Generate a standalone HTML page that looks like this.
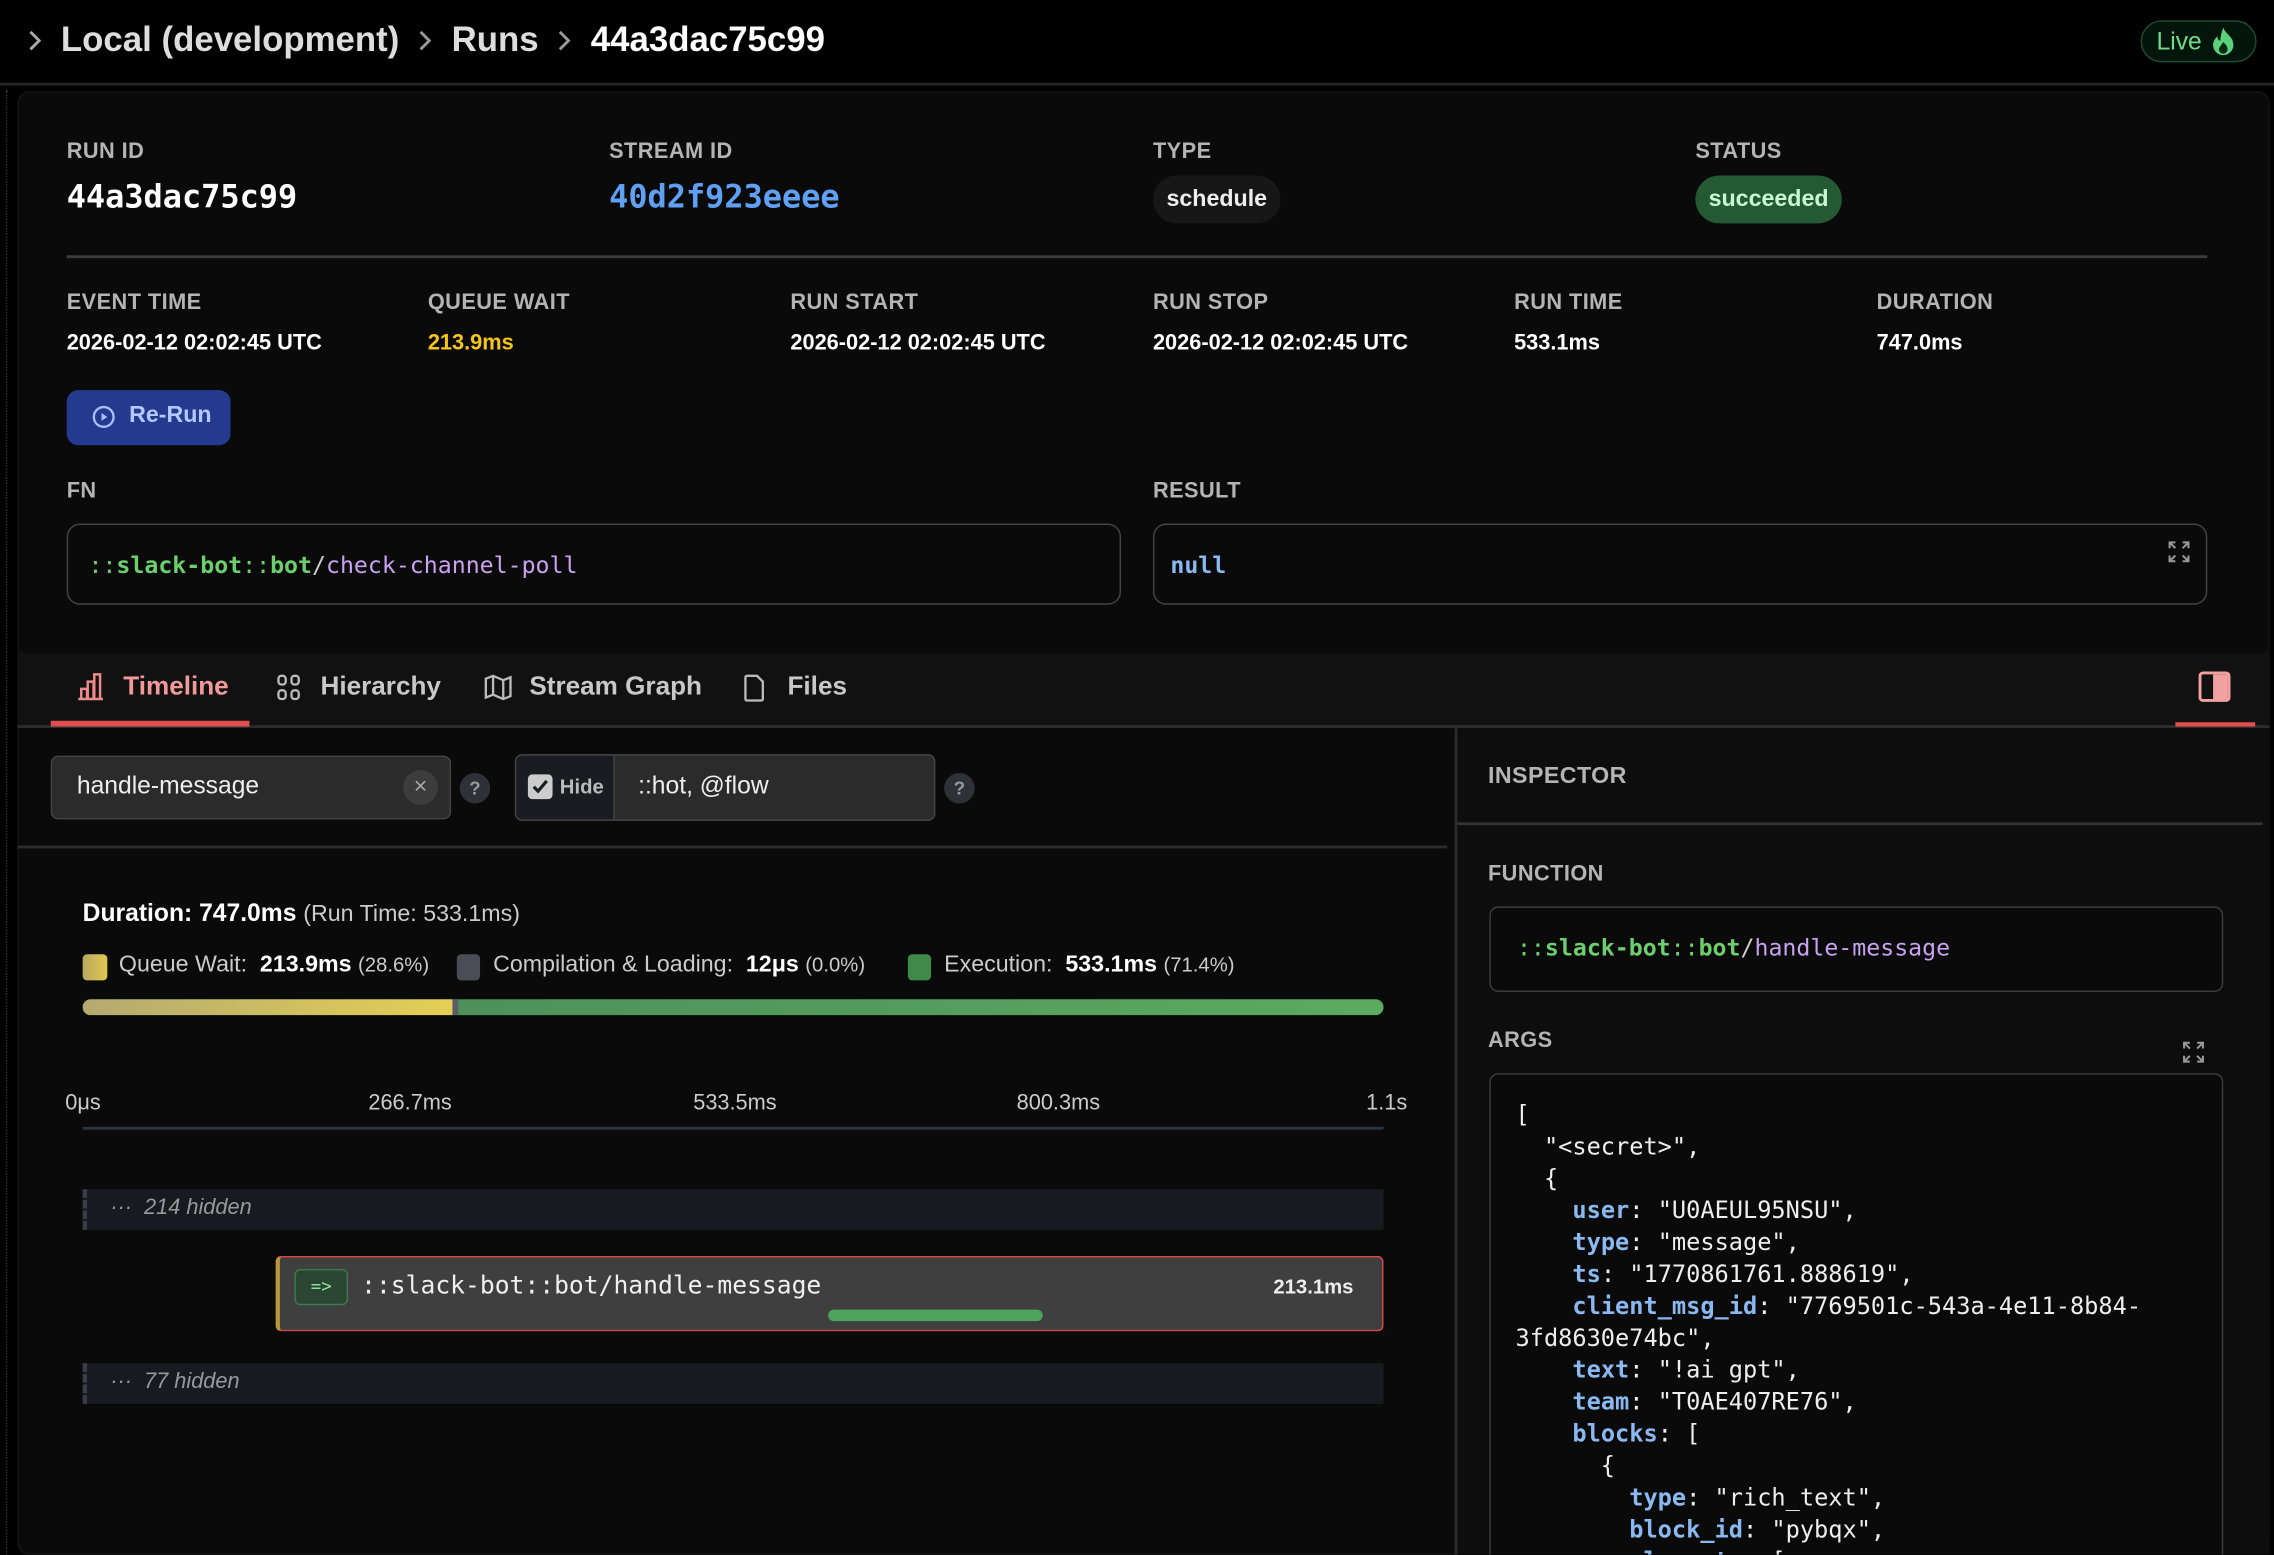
<!DOCTYPE html>
<html><head><meta charset="utf-8"><style>
*{box-sizing:border-box;margin:0;padding:0}
html,body{width:2274px;height:1554px;overflow:hidden;background:#000}
#s{position:absolute;left:0;top:0;width:1568px;height:1072px;transform:scale(1.450255);transform-origin:0 0;font-family:"Liberation Sans Narrow","Liberation Sans",sans-serif;color:#fff;background:#000;overflow:hidden}
.a{position:absolute}
.m{font-family:"DejaVu Sans Mono","Liberation Mono",monospace}
.lab{position:absolute;font-size:15px;font-weight:bold;color:#b4b4b4;letter-spacing:.3px;line-height:1}
.val{position:absolute;font-size:15px;font-weight:bold;color:#fff;line-height:1}
.g{color:#6dce6d}.p{color:#c9a2f0}.k{color:#8ab8f0}
.bc{position:absolute;left:18px;top:12px;display:flex;align-items:center;gap:12px;white-space:nowrap;font-size:24px;font-weight:bold;color:#ddd;height:32px}
</style></head><body><div id="s">
<!-- top bar -->
<div class="a" style="left:0;top:0;width:1568px;height:59px;background:#000;border-bottom:2px solid #262626"></div>
<div class="bc">
<svg width="12" height="16" viewBox="0 0 12 16"><path d="M3 2l6 6-6 6" stroke="#aaa" stroke-width="2" fill="none"/></svg>
<span>Local (development)</span>
<svg width="12" height="16" viewBox="0 0 12 16"><path d="M3 2l6 6-6 6" stroke="#999" stroke-width="2" fill="none"/></svg>
<span>Runs</span>
<svg width="12" height="16" viewBox="0 0 12 16"><path d="M3 2l6 6-6 6" stroke="#999" stroke-width="2" fill="none"/></svg>
<span style="color:#fff">44a3dac75c99</span>
</div>
<div class="a" style="left:1476px;top:14px;width:80px;height:29px;border:1.5px solid #1f4a30;border-radius:15px;background:#04150b"></div>
<div class="a" style="left:1487px;top:19px;font-size:17px;color:#6fdc8c">Live</div>
<svg class="a" style="left:1524px;top:18px" width="18" height="21" viewBox="0 0 18 21"><path d="M9 1c1 4 7 6 7 12a7 7 0 0 1-14 0c0-3 2-5 3-6 0 2 1 3 2 3C7 7 8 4 9 1z" fill="#5ad17a"/><path d="M9 11c2 2 3 3 3 5a3 3 0 0 1-6 0c0-1 1-2 3-5z" fill="#0b2a15"/></svg>
<!-- left dots -->
<div class="a" style="left:4px;top:62px;width:1px;height:1010px;border-left:1px dotted #333"></div>
<!-- main card -->
<div class="a" style="left:12px;top:63px;width:1553px;height:1009px;background:#0a0a0a;border-radius:8px;border:1px solid #141414"></div>
<div class="lab" style="left:46px;top:97px">RUN ID</div>
<div class="lab" style="left:420px;top:97px">STREAM ID</div>
<div class="lab" style="left:795px;top:97px">TYPE</div>
<div class="lab" style="left:1169px;top:97px">STATUS</div>
<div class="a m" style="left:46px;top:124px;font-size:22px;font-weight:bold">44a3dac75c99</div>
<div class="a m" style="left:420px;top:124px;font-size:22px;font-weight:bold;color:#5fa0f5">40d2f923eeee</div>
<div class="a" style="left:795px;top:121px;width:88px;height:33px;background:#171717;border-radius:17px;font-size:16px;font-weight:bold;color:#eee;text-align:center;line-height:33px">schedule</div>
<div class="a" style="left:1169px;top:121px;width:101px;height:33px;background:#245a33;border-radius:17px;font-size:16px;font-weight:bold;color:#c9f7d3;text-align:center;line-height:33px">succeeded</div>
<div class="a" style="left:46px;top:176px;width:1476px;height:2px;background:#3c3c3c"></div>
<div class="lab" style="left:46px;top:201px">EVENT TIME</div>
<div class="lab" style="left:295px;top:201px">QUEUE WAIT</div>
<div class="lab" style="left:545px;top:201px">RUN START</div>
<div class="lab" style="left:795px;top:201px">RUN STOP</div>
<div class="lab" style="left:1044px;top:201px">RUN TIME</div>
<div class="lab" style="left:1294px;top:201px">DURATION</div>
<div class="val" style="left:46px;top:229px">2026-02-12 02:02:45 UTC</div>
<div class="val" style="left:295px;top:229px;color:#f5c518">213.9ms</div>
<div class="val" style="left:545px;top:229px">2026-02-12 02:02:45 UTC</div>
<div class="val" style="left:795px;top:229px">2026-02-12 02:02:45 UTC</div>
<div class="val" style="left:1044px;top:229px">533.1ms</div>
<div class="val" style="left:1294px;top:229px">747.0ms</div>
<div class="a" style="left:46px;top:269px;width:113px;height:38px;background:#233a8f;border-radius:8px"></div>
<svg class="a" style="left:63px;top:279px" width="17" height="17" viewBox="0 0 17 17"><circle cx="8.5" cy="8.5" r="6.8" stroke="#a8c0ff" stroke-width="1.6" fill="none"/><path d="M7 5.8v5.4l4-2.7z" fill="#a8c0ff"/></svg>
<div class="a" style="left:89px;top:278px;font-size:16px;font-weight:bold;color:#b4c8ff">Re-Run</div>
<div class="lab" style="left:46px;top:331px">FN</div>
<div class="lab" style="left:795px;top:331px">RESULT</div>
<div class="a" style="left:46px;top:361px;width:727px;height:56px;border:1.5px solid #444;border-radius:9px"></div>
<div class="a m" style="left:61px;top:380px;font-size:16px;white-space:pre"><span class="g">::</span><b class="g">slack-bot</b><span class="g">::</span><b class="g">bot</b><span style="color:#ccc">/</span><span class="p">check-channel-poll</span></div>
<div class="a" style="left:795px;top:361px;width:727px;height:56px;border:1.5px solid #444;border-radius:9px"></div>
<div class="a m" style="left:807px;top:380px;font-size:16px;font-weight:bold;color:#8ab8f0">null</div>
<svg class="a" style="left:1494px;top:372px" width="17" height="17" viewBox="0 0 17 17" stroke="#999" stroke-width="1.4" fill="none"><path d="M2 6V2h4M2 2l4 4M11 2h4v4M15 2l-4 4M2 11v4h4M2 15l4-4M15 11v4h-4M15 15l-4-4"/></svg>
<!-- tabs -->
<div class="a" style="left:12px;top:450px;width:1553px;height:52px;background:#111;border-bottom:2px solid #2c2c2c"></div>
<svg class="a" style="left:52px;top:463px" width="21" height="21" viewBox="0 0 21 21" stroke="#f08a8a" stroke-width="1.7" fill="none"><path d="M2 19h17M4 19v-7h4v7M8.5 19V7h4v12M13 19V2h4v17"/></svg>
<div class="a" style="left:85px;top:463px;font-size:18px;font-weight:bold;color:#f29a9a">Timeline</div>
<div class="a" style="left:35px;top:497px;width:137px;height:4px;background:#e04e4e"></div>
<svg class="a" style="left:190px;top:464px" width="19" height="20" viewBox="0 0 19 20" stroke="#bbb" stroke-width="1.6" fill="none"><rect x="2" y="2" width="5" height="6" rx="2"/><rect x="11" y="2" width="5" height="6" rx="2"/><rect x="2" y="12" width="5" height="6" rx="2"/><rect x="11" y="12" width="5" height="6" rx="2"/></svg>
<div class="a" style="left:221px;top:463px;font-size:18px;font-weight:bold;color:#c8c8c8">Hierarchy</div>
<svg class="a" style="left:333px;top:464px" width="21" height="20" viewBox="0 0 21 20" stroke="#bbb" stroke-width="1.6" fill="none"><path d="M2 4l5-2 7 3 5-2v13l-5 2-7-3-5 2zM7 2v13M14 5v13"/></svg>
<div class="a" style="left:365px;top:463px;font-size:18px;font-weight:bold;color:#c8c8c8">Stream Graph</div>
<svg class="a" style="left:512px;top:464px" width="16" height="21" viewBox="0 0 16 21" stroke="#bbb" stroke-width="1.6" fill="none"><path d="M2 3a1 1 0 0 1 1-1h7l4 4v12a1 1 0 0 1-1 1H3a1 1 0 0 1-1-1z"/></svg>
<div class="a" style="left:543px;top:463px;font-size:18px;font-weight:bold;color:#c8c8c8">Files</div>
<div class="a" style="left:1516px;top:463px;width:22px;height:21px;border:2px solid #f3a0a0;border-radius:3px;overflow:hidden"><div style="position:absolute;right:0;top:0;width:10px;height:100%;background:#f3a0a0"></div></div>
<div class="a" style="left:1500px;top:498px;width:55px;height:3px;background:#e04e4e"></div>
<!-- filters -->
<div class="a" style="left:12px;top:583px;width:986px;height:2px;background:#2c2c2c"></div>
<div class="a" style="left:35px;top:521px;width:276px;height:44px;background:#2b2b2b;border:1.5px solid #454545;border-radius:5px"></div>
<div class="a" style="left:53px;top:532px;font-size:17px;color:#eee">handle-message</div>
<div class="a" style="left:278px;top:531px;width:24px;height:24px;border-radius:12px;background:#3c3c3c;color:#aaa;font-size:16px;text-align:center;line-height:24px">×</div>
<div class="a" style="left:317px;top:533px;width:21px;height:21px;border-radius:11px;background:#2e3138;color:#999;font-size:13px;text-align:center;line-height:21px;font-weight:bold">?</div>
<div class="a" style="left:355px;top:520px;width:290px;height:46px;background:#2b2b2b;border:1.5px solid #454545;border-radius:5px;overflow:hidden"><div style="position:absolute;left:0;top:0;width:68px;height:100%;background:#1a1c22;border-right:1.5px solid #454545"></div></div>
<div class="a" style="left:364px;top:534px;width:17px;height:17px;background:#ccc;border-radius:3px"></div>
<svg class="a" style="left:365px;top:535px" width="15" height="15" viewBox="0 0 15 15"><path d="M3 7.5l3 3 6-7" stroke="#1a1c22" stroke-width="2.2" fill="none"/></svg>
<div class="a" style="left:386px;top:534px;font-size:14px;font-weight:bold;color:#bbb">Hide</div>
<div class="a" style="left:440px;top:532px;font-size:17px;color:#eee">::hot, @flow</div>
<div class="a" style="left:651px;top:533px;width:21px;height:21px;border-radius:11px;background:#2e3138;color:#999;font-size:13px;text-align:center;line-height:21px;font-weight:bold">?</div>
<!-- duration -->
<div class="a" style="left:57px;top:620px;font-size:17px;white-space:nowrap"><b>Duration: 747.0ms</b> <span style="color:#ccc;font-size:16px">(Run Time: 533.1ms)</span></div>
<div class="a" style="left:57px;top:658px;width:17px;height:18px;border-radius:3px;background:linear-gradient(90deg,#b8a860,#e0c850)"></div>
<div class="a" style="left:82px;top:657px;font-size:16px;color:#ccc;white-space:nowrap">Queue Wait: &nbsp;<b style="color:#fff">213.9ms</b> <span style="font-size:14px">(28.6%)</span></div>
<div class="a" style="left:315px;top:658px;width:16px;height:18px;border-radius:3px;background:#4a4d56"></div>
<div class="a" style="left:340px;top:657px;font-size:16px;color:#ccc;white-space:nowrap">Compilation &amp; Loading: &nbsp;<b style="color:#fff">12μs</b> <span style="font-size:14px">(0.0%)</span></div>
<div class="a" style="left:626px;top:658px;width:16px;height:18px;border-radius:3px;background:#3f8a48"></div>
<div class="a" style="left:651px;top:657px;font-size:16px;color:#ccc;white-space:nowrap">Execution: &nbsp;<b style="color:#fff">533.1ms</b> <span style="font-size:14px">(71.4%)</span></div>
<div class="a" style="left:57px;top:689px;width:897px;height:11px;border-radius:6px;overflow:hidden;background:linear-gradient(90deg,#4a8558,#5aab60)"><div style="position:absolute;left:0;top:0;width:255px;height:100%;background:linear-gradient(90deg,#b4aa70,#e5cf55)"></div><div style="position:absolute;left:255px;top:0;width:4px;height:100%;background:#5a5d66"></div></div>
<!-- axis -->
<div class="a" style="left:45px;top:752px;font-size:15px;color:#ccc">0μs</div>
<div class="a" style="left:254px;top:752px;font-size:15px;color:#ccc">266.7ms</div>
<div class="a" style="left:478px;top:752px;font-size:15px;color:#ccc">533.5ms</div>
<div class="a" style="left:701px;top:752px;font-size:15px;color:#ccc">800.3ms</div>
<div class="a" style="left:942px;top:752px;font-size:15px;color:#ccc">1.1s</div>
<div class="a" style="left:57px;top:777px;width:897px;height:2px;background:#2d3240"></div>
<div class="a" style="left:57px;top:820px;width:897px;height:28px;background:#171a20;border-left:3px dashed #3a3d45"></div>
<div class="a" style="left:76px;top:824px;font-size:15px;color:#999;font-style:italic;white-space:nowrap">··· &nbsp;214 hidden</div>
<div class="a" style="left:190px;top:866px;width:764px;height:52px;background:#3f3f3f;border:1.5px solid #d94848;border-left:3px solid #b8963a;border-radius:4px"></div>
<div class="a" style="left:203px;top:875px;width:37px;height:25px;background:#2b4632;border:1.5px solid #3f7a4a;border-radius:4px;color:#8de09a;font-size:12px;text-align:center;line-height:22px;font-family:'DejaVu Sans Mono',monospace">=&gt;</div>
<div class="a m" style="left:249px;top:877px;font-size:17px;color:#f0f0f0;white-space:nowrap">::slack-bot::bot/handle-message</div>
<div class="a" style="left:878px;top:879px;font-size:14px;font-weight:bold;color:#eee">213.1ms</div>
<div class="a" style="left:571px;top:903px;width:148px;height:8px;border-radius:4px;background:#4ea35c"></div>
<div class="a" style="left:57px;top:940px;width:897px;height:28px;background:#171a20;border-left:3px dashed #3a3d45"></div>
<div class="a" style="left:76px;top:944px;font-size:15px;color:#999;font-style:italic;white-space:nowrap">··· &nbsp;77 hidden</div>
<!-- inspector -->
<div class="a" style="left:1003px;top:502px;width:2px;height:570px;background:#2a2a2a"></div>
<div class="a" style="left:1005px;top:502px;width:560px;height:570px;background:#0d0d0d"></div>
<div class="a" style="left:1005px;top:567px;width:555px;height:1.5px;background:#333"></div>
<div class="lab" style="left:1026px;top:528px;font-size:16px">INSPECTOR</div>
<div class="lab" style="left:1026px;top:595px">FUNCTION</div>
<div class="a" style="left:1027px;top:625px;width:506px;height:59px;border:1.5px solid #3c3c3c;border-radius:6px;background:#0a0a0a"></div>
<div class="a m" style="left:1046px;top:644px;font-size:16px;white-space:pre"><span class="g">::</span><b class="g">slack-bot</b><span class="g">::</span><b class="g">bot</b><span style="color:#ccc">/</span><span class="p">handle-message</span></div>
<div class="lab" style="left:1026px;top:710px">ARGS</div>
<svg class="a" style="left:1504px;top:717px" width="17" height="17" viewBox="0 0 17 17" stroke="#999" stroke-width="1.4" fill="none"><path d="M2 6V2h4M2 2l4 4M11 2h4v4M15 2l-4 4M2 11v4h4M2 15l4-4M15 11v4h-4M15 15l-4-4"/></svg>
<div class="a" style="left:1027px;top:740px;width:506px;height:340px;border:1.5px solid #3c3c3c;border-radius:6px;background:#0a0a0a"></div>
<pre class="a m" style="left:1045px;top:758px;font-size:16.3px;line-height:22px;color:#eee">[
  "&lt;secret&gt;",
  {
    <b class="k">user</b>: "U0AEUL95NSU",
    <b class="k">type</b>: "message",
    <b class="k">ts</b>: "1770861761.888619",
    <b class="k">client_msg_id</b>: "7769501c-543a-4e11-8b84-
3fd8630e74bc",
    <b class="k">text</b>: "!ai gpt",
    <b class="k">team</b>: "T0AE407RE76",
    <b class="k">blocks</b>: [
      {
        <b class="k">type</b>: "rich_text",
        <b class="k">block_id</b>: "pybqx",
        <b class="k">elements</b>: [</pre>
</div></body></html>
